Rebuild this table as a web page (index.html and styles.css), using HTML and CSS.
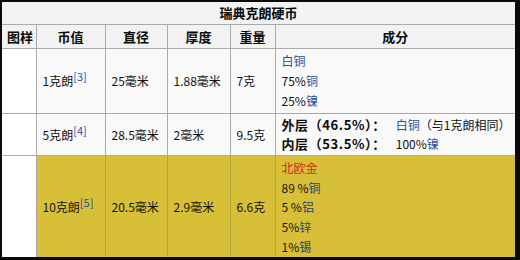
FILE: index.html
```html
<!DOCTYPE html>
<html lang="zh">
<head>
<meta charset="utf-8">
<link rel="stylesheet" href="styles.css">
</head>
<body>
<table class="coins">
  <colgroup>
    <col class="c-img"><col class="c-val"><col class="c-dia"><col class="c-thk"><col class="c-wt"><col class="c-comp">
  </colgroup>
  <tr class="r-title"><th colspan="6" class="title">瑞典克朗硬币</th></tr>
  <tr class="r-head">
    <th>图样</th><th>币值</th><th>直径</th><th>厚度</th><th>重量</th><th>成分</th>
  </tr>
  <tr class="r-one">
    <td class="img"></td>
    <td>1克朗<sup class="ref">[3]</sup></td>
    <td>25毫米</td>
    <td>1.88毫米</td>
    <td>7克</td>
    <td class="comp"><div class="lines l20"><span class="link">白铜</span><br>75%<span class="link">铜</span><br>25%<span class="link">镍</span></div></td>
  </tr>
  <tr class="r-two">
    <td class="img"></td>
    <td>5克朗<sup class="ref">[4]</sup></td>
    <td>28.5毫米</td>
    <td>2毫米</td>
    <td>9.5克</td>
    <td class="comp"><div class="lines l19"><b>外层（46.5%）：</b><span class="gap"></span><span class="link">白铜</span>（与1克朗相同）<br><b>内层（53.5%）：</b><span class="gap"></span>100%<span class="link">镍</span></div></td>
  </tr>
  <tr class="r-three">
    <td class="img"></td>
    <td class="gold">10克朗<sup class="ref">[5]</sup></td>
    <td class="gold">20.5毫米</td>
    <td class="gold">2.9毫米</td>
    <td class="gold">6.6克</td>
    <td class="gold comp"><div class="lines l195"><span class="red">北欧金</span><br>89 %<span class="link dk">铜</span><br>5 %<span class="link dk">铝</span><br>5%<span class="link dk">锌</span><br>1%<span class="link dk">锡</span></div></td>
  </tr>
</table>
</body>
</html>
```

FILE: styles.css
```css
html, body {
  margin: 0;
  background: #0a0a0a;
}
body {
  padding: 2px 5px 3px 2px;
  width: 513px;
  height: 255px;
}
.coins {
  border-collapse: collapse;
  table-layout: fixed;
  width: 513px;
  height: 255px;
  background: #f9f9f9;
  font-family: "Noto Sans CJK SC", "DejaVu Sans", sans-serif;
  font-size: 12px;
  color: #111;
}
.c-img { width: 34px; }
.c-val { width: 69px; }
.c-dia { width: 62px; }
.c-thk { width: 63px; }
.c-wt { width: 45px; }
.c-comp { width: 240px; }

.coins th, .coins td {
  border: 1px solid #aaa;
  padding: 0 5px;
  white-space: nowrap;
  overflow: hidden;
}
.coins th {
  background: #f2f2f2;
  font-weight: bold;
  font-size: 13px;
  color: #0a0a0a;
  text-align: center;
}
.coins td {
  text-align: left;
  vertical-align: middle;
  padding-left: 6px;
  padding-right: 2px;
}
.coins th.title {
  border-top: 0;
  border-left: 0;
  border-right: 0;
  padding: 0;
}
.coins tr > :first-child { border-left: 0; }
.coins tr > :last-child { border-right: 0; }
.coins tr:last-child > td { border-bottom: 0; }

.r-title { height: 22px; }
.r-head { height: 24px; }
.r-one { height: 65px; }
.r-two { height: 42px; }
.r-three { height: 102px; }

.coins td.img { background: #fff; }
.coins td.gold {
  background: #d8bf38;
  border-color: #b9a545;
  color: #141408;
}
.coins td.comp { padding-left: 6px; }
.lines.l20 { line-height: 20px; }
.lines.l19 { line-height: 19px; }
.lines.l195 { line-height: 19.6px; padding-top: 2px; }
.lines b {
  font-weight: bold;
  font-size: 13px;
  color: #0a0a0a;
  letter-spacing: 0.6px;
}
.gap {
  display: inline-block;
  width: 10px;
}
.link { color: #2a4ea0; }
.link.dk { color: #2c3e78; }
.red { color: #c8321a; }
.ref {
  color: #2a4ea0;
  font-size: 11px;
  line-height: 0;
  vertical-align: 5px;
}
```
